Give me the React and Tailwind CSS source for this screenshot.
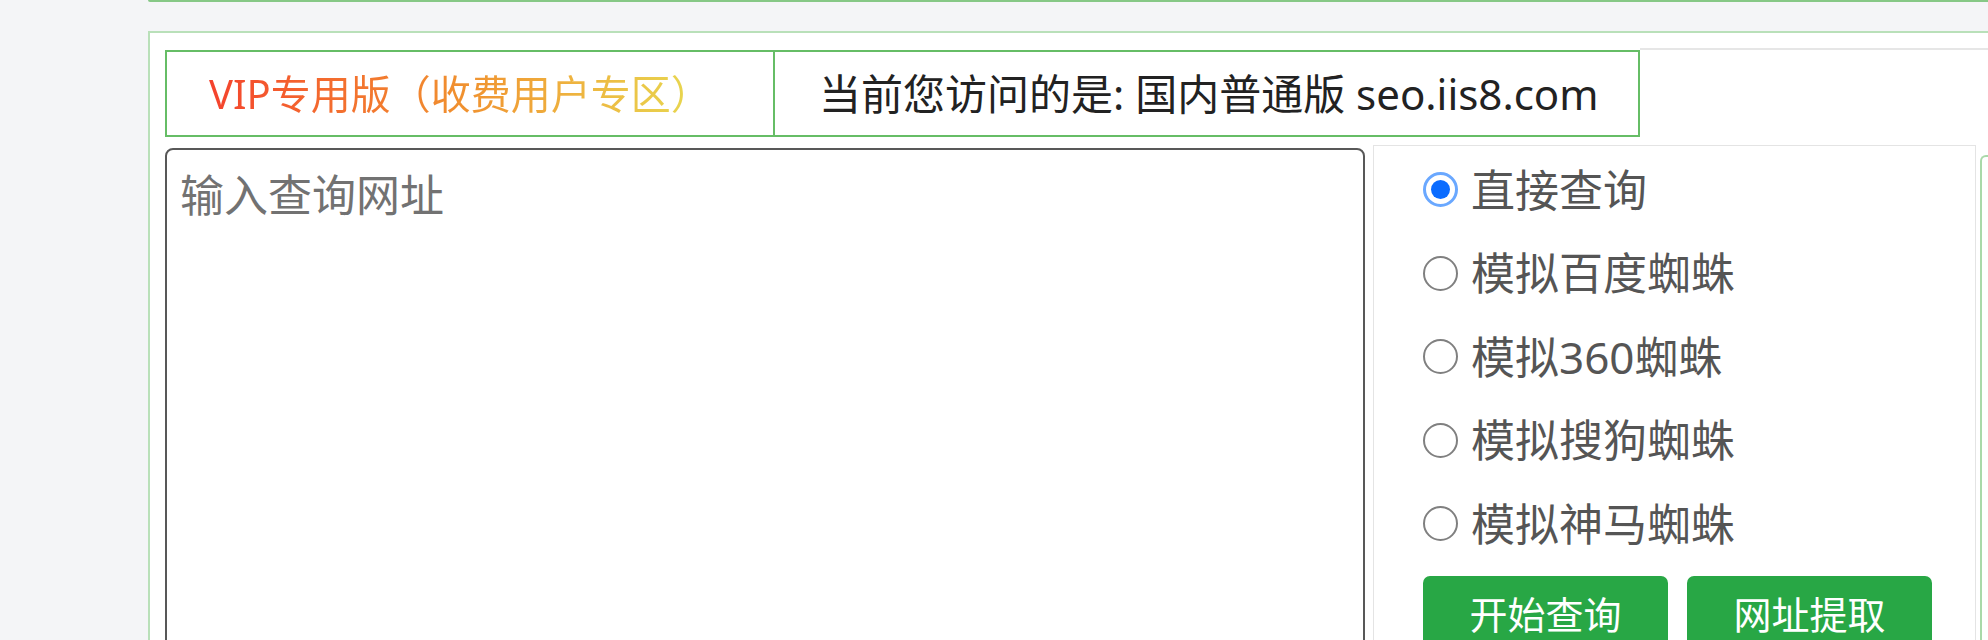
import React from 'react';

const FONT = "font-['Noto_Sans','Noto_Sans_CJK_SC',sans-serif]";

const options = ['直接查询', '模拟百度蜘蛛', '模拟360蜘蛛', '模拟搜狗蜘蛛', '模拟神马蜘蛛'];

const Radio = ({ checked }) => {
  if (checked) {
    return (
      <span className="w-[35px] h-[35px] shrink-0 rounded-full border-[3px] border-[#6aa8ff] bg-white flex items-center justify-center">
        <span className="w-[19px] h-[19px] rounded-full bg-[#0b6cff]" />
      </span>
    );
  }
  return <span className="w-[35px] h-[35px] shrink-0 rounded-full border-2 border-[#808080] bg-white" />;
};

const App = () => {
  return (
    <div className={`w-full h-[640px] overflow-hidden bg-[#f4f5f7] pl-[148px] flex flex-col ${FONT}`}>
      {/* bottom edge of the panel above */}
      <div className="h-[2px] shrink-0 bg-[#86c886] rounded-bl-[2px]" />

      <div className="mt-[29px] flex-1 bg-white border-2 border-r-0 border-b-0 border-[#b9e0b9] pt-[17px] pl-[15px] flex flex-col">
        {/* tabs */}
        <div className="flex shrink-0">
          <div className="w-[610px] h-[87px] border-2 border-[#66bd66] flex items-center pl-[42px] text-[40px] leading-none">
            <span className="bg-gradient-to-r from-[#f4412d] via-[#f0902f] to-[#e6dc52] bg-clip-text text-transparent">
              VIP专用版（收费用户专区）
            </span>
          </div>
          <div className="w-[865px] h-[87px] border-2 border-l-0 border-[#66bd66] flex items-center pl-[44px] text-[42px] leading-none text-[#222]">
            当前您访问的是: 国内普通版 seo.iis8.com
          </div>
          <div className="flex-1 self-start h-[2px] -translate-y-[2px] bg-[#e6e6e6]" />
        </div>

        {/* body */}
        <div className="flex flex-1 mt-[11px] min-h-0">
          <textarea
            className={`w-[1200px] h-[600px] shrink-0 resize-none border-2 border-[#585858] rounded-[8px] pl-[13px] pt-[12px] text-[44px] leading-[1.5] text-[#333] placeholder:text-[#727272] outline-none ${FONT}`}
            placeholder="输入查询网址"
          />

          <div className="ml-[8px] -mt-[3px] w-[603px] shrink-0 border border-[#e4e4e4] border-b-0 pt-[2px] pl-[49px] flex flex-col">
            {options.map((label, i) => (
              <div key={label} className="h-[83.5px] flex items-center gap-[13px] text-[44px] leading-none text-[#555]">
                <Radio checked={i === 0} />
                <span>{label}</span>
              </div>
            ))}
            <div className="flex gap-[19px] mt-[10px]">
              <button className="w-[245px] h-[76px] rounded-[7px] bg-[#28a745] text-white text-[38px] leading-none flex items-center justify-center">
                开始查询
              </button>
              <button className="w-[245px] h-[76px] rounded-[7px] bg-[#28a745] text-white text-[38px] leading-none flex items-center justify-center">
                网址提取
              </button>
            </div>
          </div>

          <div className="ml-[4px] mt-[7px] w-[40px] shrink-0 border-2 border-r-0 border-b-0 border-[#a9d9a9] rounded-tl-[6px]" />
        </div>
      </div>
    </div>
  );
};

export default App;
